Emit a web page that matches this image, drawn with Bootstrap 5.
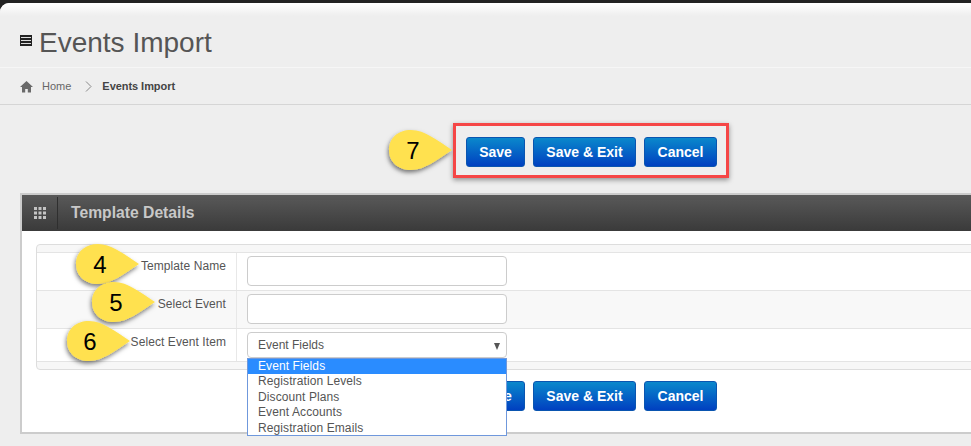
<!DOCTYPE html>
<html lang="en">
<head>
<meta charset="utf-8">
<title>Events Import</title>
<link rel="stylesheet" href="https://cdn.jsdelivr.net/npm/bootstrap@5.3.0/dist/css/bootstrap.min.css">
<style>
html,body{height:446px;overflow:hidden;background:#222;}
body{font-family:"Liberation Sans",Arial,sans-serif;font-size:12px;color:#555;}
.page-shell{margin-top:3px;height:443px;background:#eee;border-top-left-radius:9px;overflow:hidden;position:relative;}
.title-bar{height:65px;padding:16px 20px 0;background:linear-gradient(#fff 0,#eee 13px);border-bottom:1px solid #f6f6f6;}
.title-bar h1{font-size:28px;font-weight:400;color:#555;margin:0;line-height:32px;}
.title-icon{width:12px;height:11px;margin-right:7px;margin-top:-6px;}
.crumbs{height:37px;padding:0 20px;border-bottom:1px solid #d5d5d5;font-size:11px;color:#666;}
.crumbs b{color:#444;letter-spacing:-.05px;}
.crumb-sep{margin:0 10px 0 14px;}
.home-ico{margin-right:9px;}
.top-actions{padding-top:18px;height:88px;}
.red-frame{margin-left:453px;border:3px solid #f54646;padding:11px 9px 8px 10px;box-shadow:0 2px 5px rgba(0,0,0,.4);position:relative;gap:8px;}
.blue-btn{height:30px;padding:0;border:1px solid #0a55b0;border-radius:3px;background:linear-gradient(#0a88cc,#0040c0);color:#fff;font:bold 14px/29px "Liberation Sans",Arial,sans-serif;}
.blue-btn:hover{background:linear-gradient(#0a88cc,#0040c0);color:#fff;}
.w-save{width:59px;}.w-exit{width:103px;}.w-cancel{width:73px;}
.tpl-panel{margin-left:20px;width:1100px;height:241px;border:2px solid #ccc;border-right:0;background:#fff;position:relative;}
.tpl-head{height:36px;background:linear-gradient(#595959,#3a3a3a);}
.grid-cell{width:36px;height:32px;border-right:1px solid #2f2f2f;margin-right:13px;padding-left:12px;}
.tpl-head span{font-size:15.700px;font-weight:700;color:#c8c8c8;}
.tpl-table{margin:13px 0 0 14px;border:1px solid #ddd;border-radius:4px 0 0 4px;background:#f7f7f7;padding:7px 0 8px;height:126px;}
.tpl-row{border-top:1px solid #e4e4e4;background:#fff;height:38px;}
.tpl-row.odd{background:#f8f8f8;}
.tpl-row.last{height:34px;border-bottom:1px solid #e4e4e4;background:#fff;}
.tpl-lbl{width:200px;border-right:1px solid #e8e8e8;text-align:right;padding:6px 10px 0 0;line-height:14px;color:#555;letter-spacing:.08px;}
.tpl-field{padding:3px 0 0 10px;}
.tpl-input{width:260px;height:30px;border:1px solid #ccc;border-radius:4px;padding:0 10px;font-size:12px;color:#555;box-shadow:none;}
.tpl-select{height:26px;line-height:24px;padding:0 10px;position:relative;}
.open-menu{position:absolute;left:225px;top:163px;width:260px;height:78px;border:1px solid #6f98dc;background:#fff;font-size:12px;line-height:15.400px;color:#555;z-index:3;}
.open-menu div{padding-left:10px;height:15.400px;letter-spacing:.1px;}
.open-menu .sel{background:#2a8cff;color:#fff;}
.bottom-actions{padding:11px 0 0 444px;gap:8px;}
.pin{position:absolute;width:66px;height:44px;z-index:4;}
.pin svg{position:absolute;left:0;top:0;overflow:visible;}
.pin i{position:absolute;left:0;top:1px;width:50px;height:42px;font:normal 24px/42px "Liberation Sans",Arial,sans-serif;color:#000;text-align:center;}
.pin7{left:-68px;top:3px;}
.pin4{left:53px;top:48px;}
.pin5{left:69px;top:86px;}
.pin6{left:44px;top:125px;}
.pin6 i{width:48px;}
.caret-tri{position:absolute;left:246px;top:10px;width:0;height:0;border-left:3.500px solid transparent;border-right:3.500px solid transparent;border-top:7px solid #555;}
</style>
</head>
<body>
<div class="page-shell">
  <div class="title-bar d-flex align-items-center">
    <svg class="title-icon" viewBox="0 0 12 11"><rect width="12" height="11" fill="#222"/><path d="M1 2.500h10M1 5.500h10M1 8.500h10" stroke="#ddd" stroke-width="1"/></svg>
    <h1>Events Import</h1>
  </div>
  <div class="crumbs d-flex align-items-center">
    <svg class="home-ico" width="13" height="13" viewBox="0 0 13 13"><path d="M6.500 1 0 7h2v5.500h3.200V9h2.600v3.500H11V7h2z" fill="#6a6a6a"/></svg>
    <span>Home</span>
    <svg class="crumb-sep" width="7" height="11" viewBox="0 0 7 11"><path d="M1 .5 6 5.500 1 10.500" fill="none" stroke="#888" stroke-width="1"/></svg>
    <b>Events Import</b>
  </div>
  <div class="top-actions">
    <div class="red-frame d-inline-flex">
      <div class="pin pin7">
        <svg width="66" height="42" viewBox="0 0 66 42"><defs><filter id="sh" x="-20%" y="-20%" width="140%" height="150%"><feDropShadow dx="-1" dy="2.500" stdDeviation="2" flood-color="#000" flood-opacity=".5"/></filter></defs><path d="M1 21C1 9 10 1 23 1 37 1 50 12 64 21 50 30 37 41 23 41 10 41 1 33 1 21Z" fill="#ffe14f" filter="url(#sh)"/></svg>
        <i>7</i>
      </div>
      <button type="button" class="btn blue-btn w-save">Save</button>
      <button type="button" class="btn blue-btn w-exit">Save &amp; Exit</button>
      <button type="button" class="btn blue-btn w-cancel">Cancel</button>
    </div>
  </div>
  <div class="tpl-panel">
    <div class="tpl-head d-flex align-items-center">
      <div class="grid-cell d-flex align-items-center">
        <svg width="12" height="12" viewBox="0 0 12 12" fill="#c4c4c4"><rect width="3" height="3"/><rect x="4.500" width="3" height="3"/><rect x="9" width="3" height="3"/><rect y="4.500" width="3" height="3"/><rect x="4.500" y="4.500" width="3" height="3"/><rect x="9" y="4.500" width="3" height="3"/><rect y="9" width="3" height="3"/><rect x="4.500" y="9" width="3" height="3"/><rect x="9" y="9" width="3" height="3"/></svg>
      </div>
      <span>Template Details</span>
    </div>
    <div class="tpl-table">
      <div class="tpl-row d-flex">
        <div class="tpl-lbl">Template Name</div>
        <div class="tpl-field"><input type="text" class="form-control tpl-input"></div>
      </div>
      <div class="tpl-row odd d-flex">
        <div class="tpl-lbl">Select Event</div>
        <div class="tpl-field"><input type="text" class="form-control tpl-input"></div>
      </div>
      <div class="tpl-row last d-flex">
        <div class="tpl-lbl">Select Event Item</div>
        <div class="tpl-field"><div class="form-control tpl-input tpl-select">Event Fields<span class="caret-tri"></span></div></div>
      </div>
    </div>
    <div class="bottom-actions d-flex">
      <button type="button" class="btn blue-btn w-save">Save</button>
      <button type="button" class="btn blue-btn w-exit">Save &amp; Exit</button>
      <button type="button" class="btn blue-btn w-cancel">Cancel</button>
    </div>
    <div class="open-menu">
      <div class="sel">Event Fields</div>
      <div>Registration Levels</div>
      <div>Discount Plans</div>
      <div>Event Accounts</div>
      <div>Registration Emails</div>
    </div>
    <div class="pin pin4">
      <svg width="66" height="42" viewBox="0 0 66 42"><path d="M1 21C1 9 10 1 23 1 37 1 50 12 64 21 50 30 37 41 23 41 10 41 1 33 1 21Z" fill="#ffe14f" filter="url(#sh)"/></svg>
      <i>4</i>
    </div>
    <div class="pin pin5">
      <svg width="66" height="42" viewBox="0 0 66 42"><path d="M1 21C1 9 10 1 23 1 37 1 50 12 64 21 50 30 37 41 23 41 10 41 1 33 1 21Z" fill="#ffe14f" filter="url(#sh)"/></svg>
      <i>5</i>
    </div>
    <div class="pin pin6">
      <svg width="66" height="42" viewBox="0 0 66 42"><path d="M1 21C1 9 10 1 23 1 37 1 50 12 64 21 50 30 37 41 23 41 10 41 1 33 1 21Z" fill="#ffe14f" filter="url(#sh)"/></svg>
      <i>6</i>
    </div>
  </div>
</div>
<script src="https://cdn.jsdelivr.net/npm/bootstrap@5.3.0/dist/js/bootstrap.bundle.min.js"></script>
</body>
</html>
